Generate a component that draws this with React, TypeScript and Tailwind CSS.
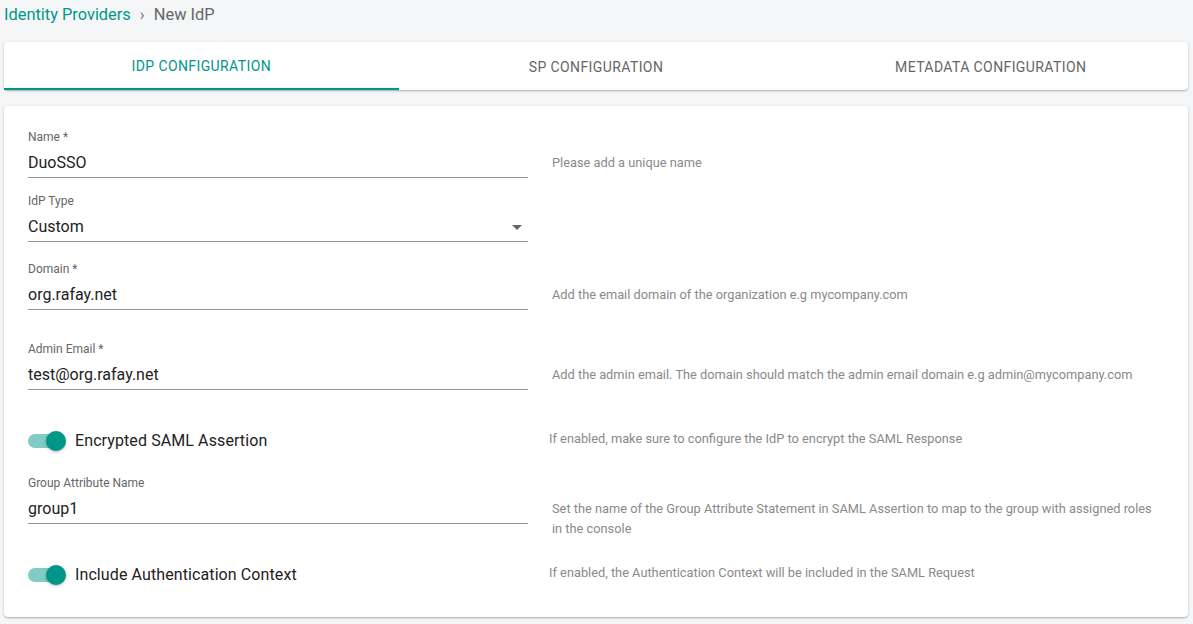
import React from "react";

const TEAL = "text-[#009688]";

function TextRow({
  label,
  value,
  helper,
  select,
  className = "",
}: {
  label: string;
  value: string;
  helper?: string;
  select?: boolean;
  className?: string;
}) {
  return (
    <div className={`flex ${className}`}>
      <div className="w-[500px] shrink-0">
        <div className="text-[12px] leading-[16px] text-[#666]">{label}</div>
        <div className="mt-[6px] flex items-center justify-between border-b border-[#949494] pb-[2px]">
          <span className="text-[16px] leading-[24px] text-[#222]">{value}</span>
          {select && (
            <svg width="10" height="5" viewBox="0 0 10 5" className="mr-[6px]">
              <path d="M0 0 L10 0 L5 5 Z" fill="#666" />
            </svg>
          )}
        </div>
      </div>
      {helper && (
        <div className="ml-[24px] flex-1 pt-[24px] text-[12.8px] leading-[20px] text-[#8a8a8a]">
          {helper}
        </div>
      )}
    </div>
  );
}

function ToggleRow({
  label,
  helper,
  className = "",
}: {
  label: string;
  helper: string;
  className?: string;
}) {
  return (
    <div className={`flex h-[20px] items-center ${className}`}>
      <div className="flex w-[500px] shrink-0 items-center">
        <div className="relative h-[20px] w-[38px]">
          <div className="absolute left-0 top-[3px] h-[14px] w-[36px] rounded-full bg-[#80cbc4]" />
          <div className="absolute right-0 top-0 h-[20px] w-[20px] rounded-full bg-[#009688] shadow-[0_1px_3px_rgba(0,0,0,0.3)]" />
        </div>
        <span className="ml-[9px] text-[16px] leading-[20px] tracking-[0.1px] text-[#222]">{label}</span>
      </div>
      <div className="ml-[21px] -mt-[4px] text-[12.8px] leading-[20px] text-[#8a8a8a]">
        {helper}
      </div>
    </div>
  );
}

export default function App() {
  const tabs = ["IdP Configuration", "SP Configuration", "Metadata Configuration"];
  return (
    <div
      className="min-h-screen w-full bg-[#f5f6f8] px-[4px] pb-[6px]"
      style={{ fontFamily: "Roboto, 'Liberation Sans', sans-serif" }}
    >
      {/* Breadcrumb */}
      <div className="flex h-[30px] items-center text-[16.4px]">
        <span className={TEAL}>Identity Providers</span>
        <span className="mx-[9px] text-[#777]">›</span>
        <span className="text-[#666]">New IdP</span>
      </div>

      {/* Tabs */}
      <div className="mt-[12px] mr-[1px] flex h-[48px] rounded-[4px] bg-white shadow-[0_1px_3px_rgba(0,0,0,0.2),0_1px_1px_rgba(0,0,0,0.12)]">
        {tabs.map((t, i) => (
          <div
            key={t}
            className={`flex flex-1 items-center justify-center pt-[2px] text-[14px] uppercase tracking-[0.4px] ${
              i === 0 ? "border-b-[2px] border-[#009688] text-[#009688]" : "text-[#666]"
            }`}
          >
            {t}
          </div>
        ))}
      </div>

      {/* Form card */}
      <div className="mt-[16px] mr-[1px] rounded-[4px] bg-white px-[24px] pb-[32px] pt-[23px] shadow-[0_1px_3px_rgba(0,0,0,0.2),0_1px_1px_rgba(0,0,0,0.12)]">
        <TextRow label="Name *" value="DuoSSO" helper="Please add a unique name" />
        <TextRow label="IdP Type" value="Custom" select className="mt-[15px]" />
        <TextRow
          label="Domain *"
          value="org.rafay.net"
          helper="Add the email domain of the organization e.g mycompany.com"
          className="mt-[19px]"
        />
        <TextRow
          label="Admin Email *"
          value="test@org.rafay.net"
          helper="Add the admin email. The domain should match the admin email domain e.g admin@mycompany.com"
          className="mt-[31px]"
        />
        <ToggleRow
          label="Encrypted SAML Assertion"
          helper="If enabled, make sure to configure the IdP to encrypt the SAML Response"
          className="mt-[41px]"
        />
        <TextRow
          label="Group Attribute Name"
          value="group1"
          helper="Set the name of the Group Attribute Statement in SAML Assertion to map to the group with assigned roles in the console"
          className="mt-[24px]"
        />
        <ToggleRow
          label="Include Authentication Context"
          helper="If enabled, the Authentication Context will be included in the SAML Request"
          className="mt-[26px]"
        />
      </div>
    </div>
  );
}
